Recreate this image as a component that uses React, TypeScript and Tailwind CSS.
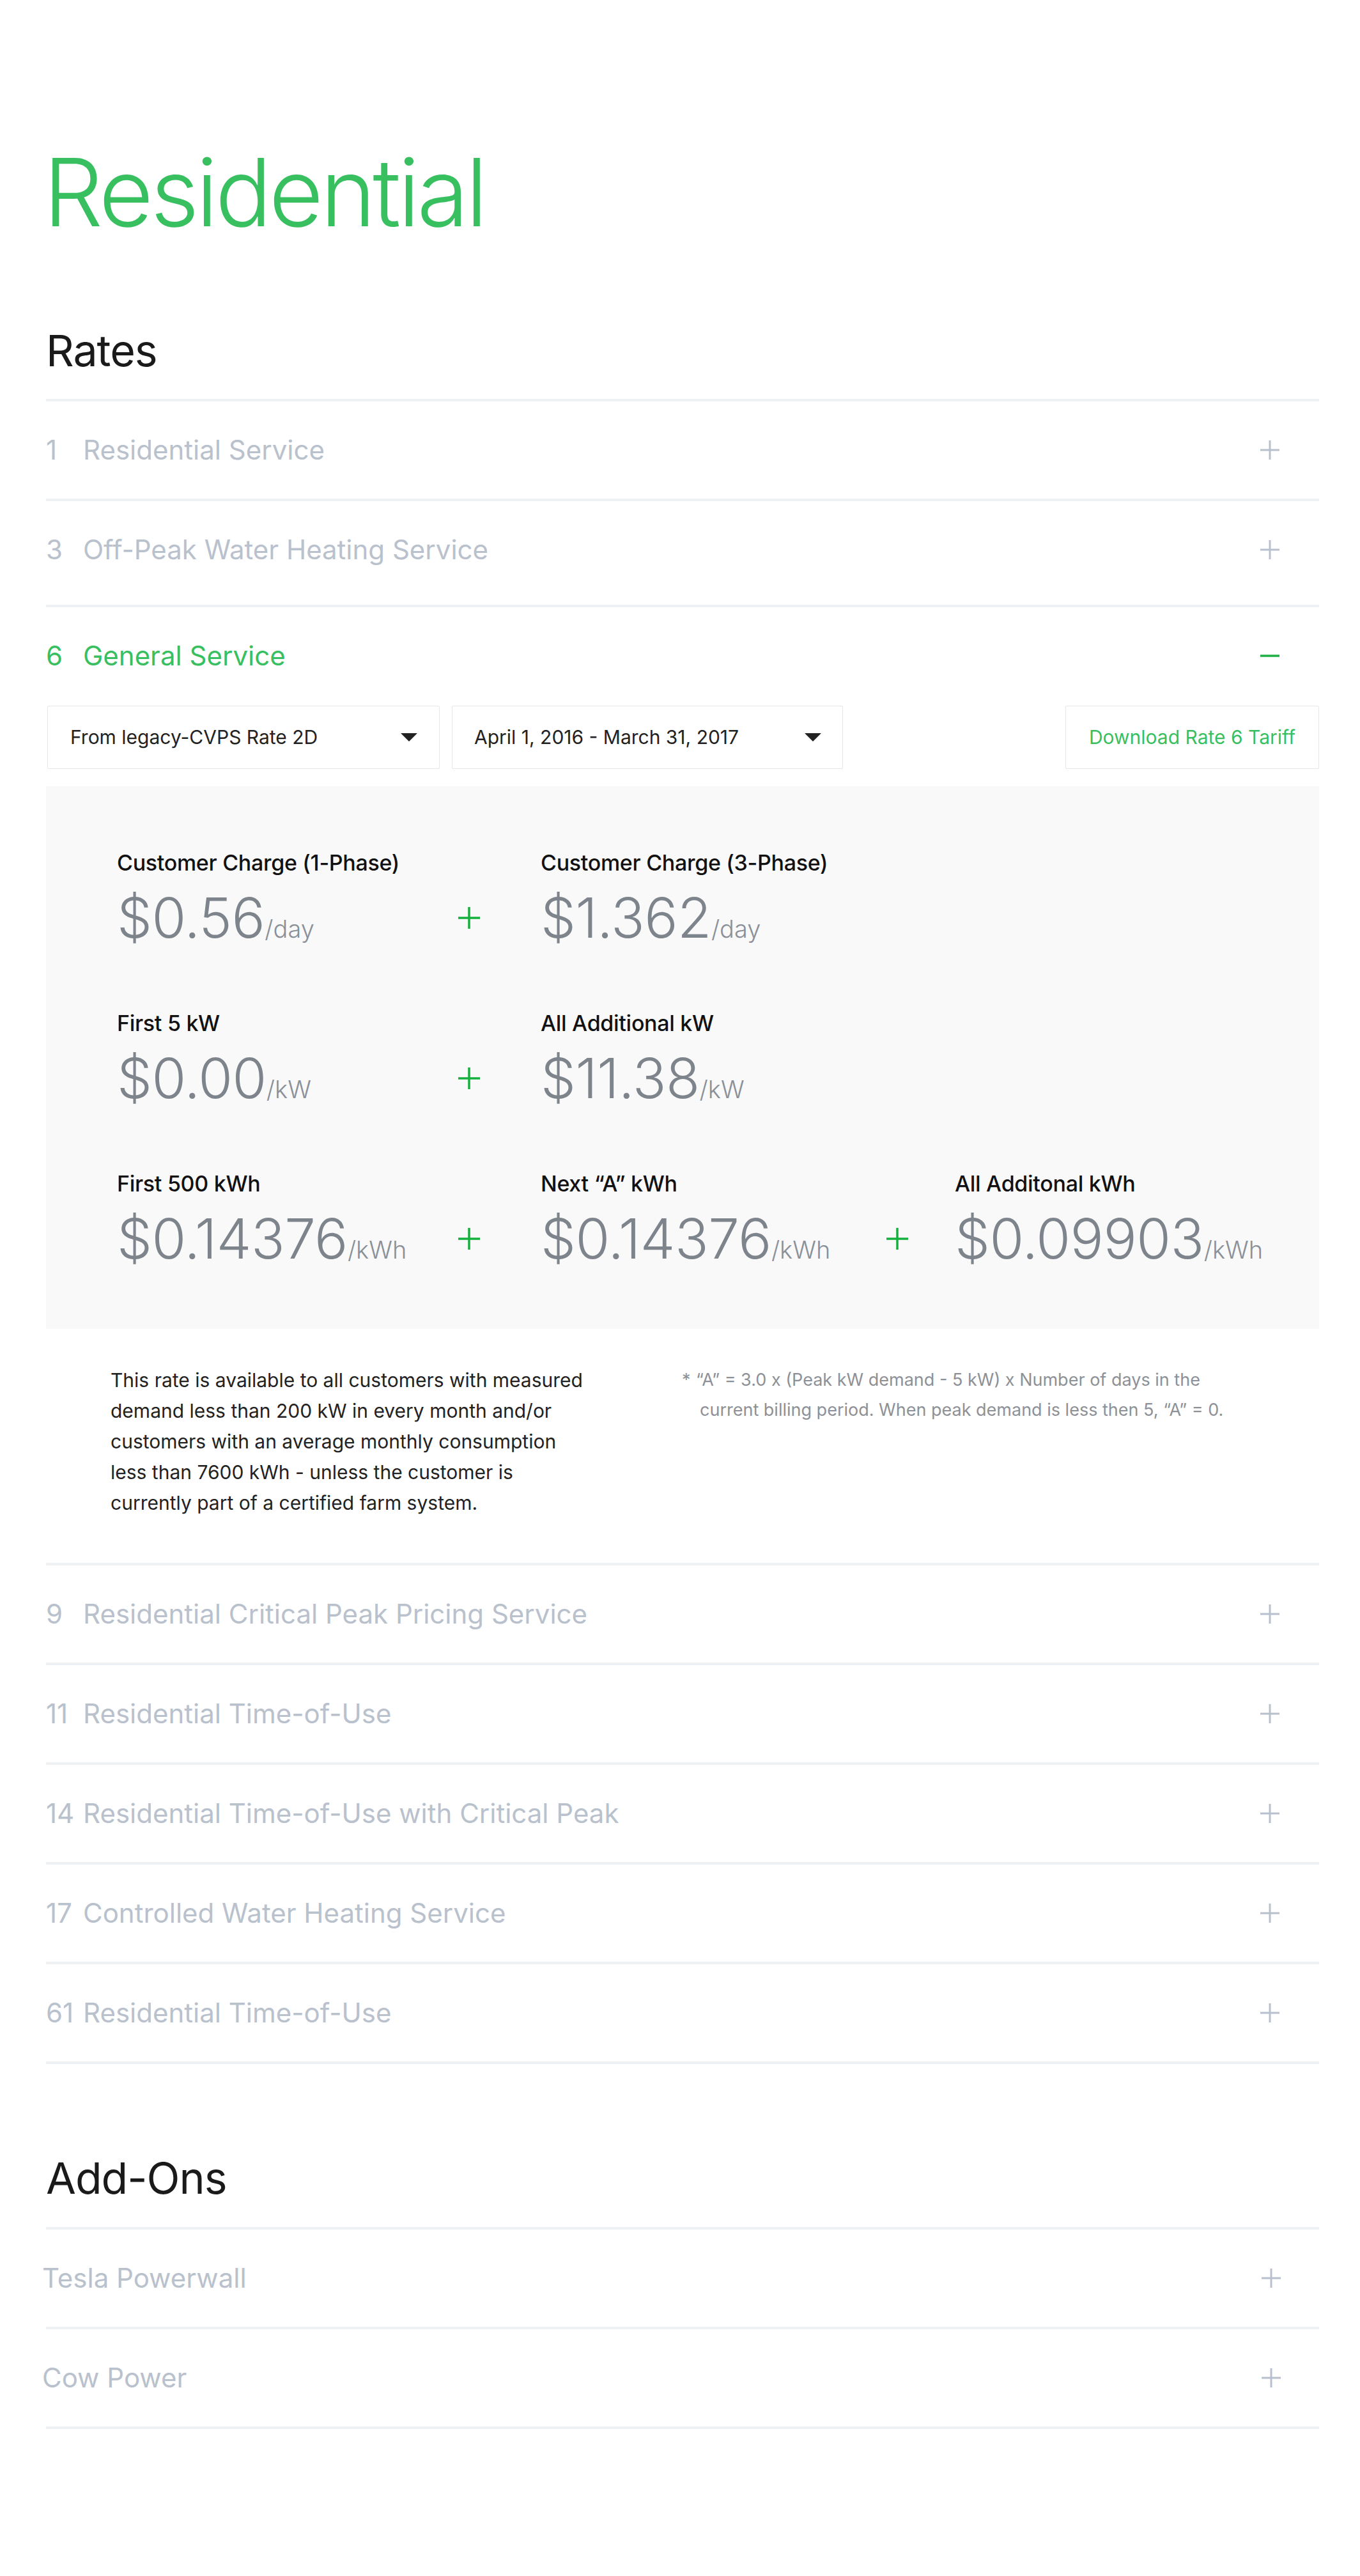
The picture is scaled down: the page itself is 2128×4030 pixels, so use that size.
import React from 'react';

const rates = [
  { num: '1', title: 'Residential Service' },
  { num: '3', title: 'Off-Peak Water Heating Service', extra: true },
  { num: '6', title: 'General Service', open: true },
  { num: '9', title: 'Residential Critical Peak Pricing Service' },
  { num: '11', title: 'Residential Time-of-Use' },
  { num: '14', title: 'Residential Time-of-Use with Critical Peak' },
  { num: '17', title: 'Controlled Water Heating Service' },
  { num: '61', title: 'Residential Time-of-Use' },
];

const addOns = ['Tesla Powerwall', 'Cow Power'];

const PlusIcon: React.FC<{ color?: string; size?: number; stroke?: number }> = ({
  color = '#b7c0cc',
  size = 30,
  stroke = 3,
}) => (
  <svg width={size} height={size} viewBox={`0 0 ${size} ${size}`} className="block shrink-0">
    <line x1={size / 2} y1="0" x2={size / 2} y2={size} stroke={color} strokeWidth={stroke} />
    <line x1="0" y1={size / 2} x2={size} y2={size / 2} stroke={color} strokeWidth={stroke} />
  </svg>
);

const MinusIcon = () => (
  <svg width="30" height="30" viewBox="0 0 30 30" className="block shrink-0">
    <line x1="0" y1="15" x2="30" y2="15" stroke="#1fb043" strokeWidth="3.5" />
  </svg>
);

const Caret = () => (
  <svg width="26" height="13" viewBox="0 0 26 13" className="block shrink-0">
    <path d="M0 0 H26 L13 13 Z" fill="#222" />
  </svg>
);

const Price: React.FC<{ label: string; value: string; unit: string }> = ({ label, value, unit }) => (
  <div className="flex flex-col">
    <div className="text-[34px] leading-[40px] font-medium text-[#111] whitespace-nowrap tracking-[-0.3px]">{label}</div>
    <div className="mt-[22px] flex items-baseline h-[87px] whitespace-nowrap">
      <span className="text-[87px] leading-[87px] font-light text-[#7e848c] tracking-[-0.5px]">{value}</span>
      <span className="text-[38px] font-light text-[#8a9098]">{unit}</span>
    </div>
  </div>
);

const PanelPlus = () => (
  <div className="flex items-end h-[149px] pb-[26px]">
    <PlusIcon color="#14b03d" size={34} stroke={3.5} />
  </div>
);

const RatePanel = () => (
  <div className="bg-[#f9f9f9] pt-[100px] pb-[98px] pl-[111px] flex flex-col gap-[102px]">
    <div className="grid grid-cols-[534px_129px_541px_107px_1fr]">
      <Price label="Customer Charge (1-Phase)" value="$0.56" unit="/day" />
      <PanelPlus />
      <Price label="Customer Charge (3-Phase)" value="$1.362" unit="/day" />
    </div>
    <div className="grid grid-cols-[534px_129px_541px_107px_1fr]">
      <Price label="First 5 kW" value="$0.00" unit="/kW" />
      <PanelPlus />
      <Price label="All Additional kW" value="$11.38" unit="/kW" />
    </div>
    <div className="grid grid-cols-[534px_129px_541px_107px_1fr]">
      <Price label="First 500 kWh" value="$0.14376" unit="/kWh" />
      <PanelPlus />
      <Price label="Next “A” kWh" value="$0.14376" unit="/kWh" />
      <PanelPlus />
      <Price label="All Additonal kWh" value="$0.09903" unit="/kWh" />
    </div>
  </div>
);

const OpenBody = () => (
  <div className="pb-[70px]">
    <div className="mt-[2px] flex items-stretch h-[99px]">
      <div className="ml-[2px] w-[614px] border border-[#e6e6e6] rounded-[2px] flex items-center justify-between pl-[35px] pr-[34px] text-[30px] text-[#222]">
        <span>From legacy-CVPS Rate 2D</span>
        <Caret />
      </div>
      <div className="ml-[19px] w-[612px] border border-[#e6e6e6] rounded-[2px] flex items-center justify-between pl-[34px] pr-[33px] text-[30px] text-[#222]">
        <span>April 1, 2016 - March 31, 2017</span>
        <Caret />
      </div>
      <div className="ml-auto w-[397px] border border-[#e6e6e6] rounded-[2px] flex items-center justify-center text-[30px] text-[#38c060]">
        Download Rate 6 Tariff
      </div>
    </div>
    <div className="mt-[27px]">
      <RatePanel />
    </div>
    <div className="mt-[56px] grid grid-cols-[995px_1fr]">
      <p className="pl-[101px] text-[30px] leading-[48px] text-[#222]">
        <span className="block whitespace-nowrap">This rate is available to all customers with measured</span>
        <span className="block whitespace-nowrap">demand less than 200 kW in every month and/or</span>
        <span className="block whitespace-nowrap">customers with an average monthly consumption</span>
        <span className="block whitespace-nowrap">less than 7600 kWh - unless the customer is</span>
        <span className="block whitespace-nowrap">currently part of a certified farm system.</span>
      </p>
      <div className="flex text-[27px] leading-[47px] text-[#8d9197]">
        <span className="w-[22px] shrink-0">*</span>
        <div>
          <span className="block whitespace-nowrap">“A” = 3.0 x (Peak kW demand - 5 kW) x Number of days in the</span>
          <span className="block whitespace-nowrap pl-[6px]">current billing period. When peak demand is less then 5, “A” = 0.</span>
        </div>
      </div>
    </div>
  </div>
);

export default function App() {
  return (
    <div className="min-h-[4030px] bg-white font-['Inter',sans-serif]">
      <div className="ml-[72px] w-[1992px] pt-[227px]">
        <h1 className="text-[147px] leading-[147px] font-light text-[#38c060] -ml-[4px] tracking-[-4.5px]">Residential</h1>

        <h2 className="mt-[140px] mb-[42px] text-[68px] leading-[68px] font-normal text-[#1a1a1a] tracking-[-1px]">Rates</h2>

        <div className="border-b-4 border-[#eef1f4]">
          {rates.map((r) => (
            <div key={r.num} className={`border-t-4 border-[#eef1f4] ${r.extra ? 'pb-[10px]' : ''}`}>
              <div className="h-[152px] flex items-center justify-between pr-[62px]">
                <div className={`flex text-[42px] leading-none ${r.open ? 'text-[#38c060]' : 'text-[#b9c1cd]'}`}>
                  <span className="w-[58px] shrink-0">{r.num}</span>
                  <span>{r.title}</span>
                </div>
                {r.open ? <MinusIcon /> : <PlusIcon />}
              </div>
              {r.open && <OpenBody />}
            </div>
          ))}
        </div>

        <h2 className="mt-[144px] mb-[43px] text-[68px] leading-[68px] font-normal text-[#1a1a1a] tracking-[-1px]">Add-Ons</h2>

        <div className="border-b-4 border-[#eef1f4]">
          {addOns.map((a) => (
            <div key={a} className="border-t-4 border-[#eef1f4]">
              <div className="h-[152px] flex items-center justify-between pr-[60px]">
                <span className="-ml-[6px] text-[42px] leading-none text-[#b9c1cd]">{a}</span>
                <PlusIcon />
              </div>
            </div>
          ))}
        </div>
      </div>
    </div>
  );
}
